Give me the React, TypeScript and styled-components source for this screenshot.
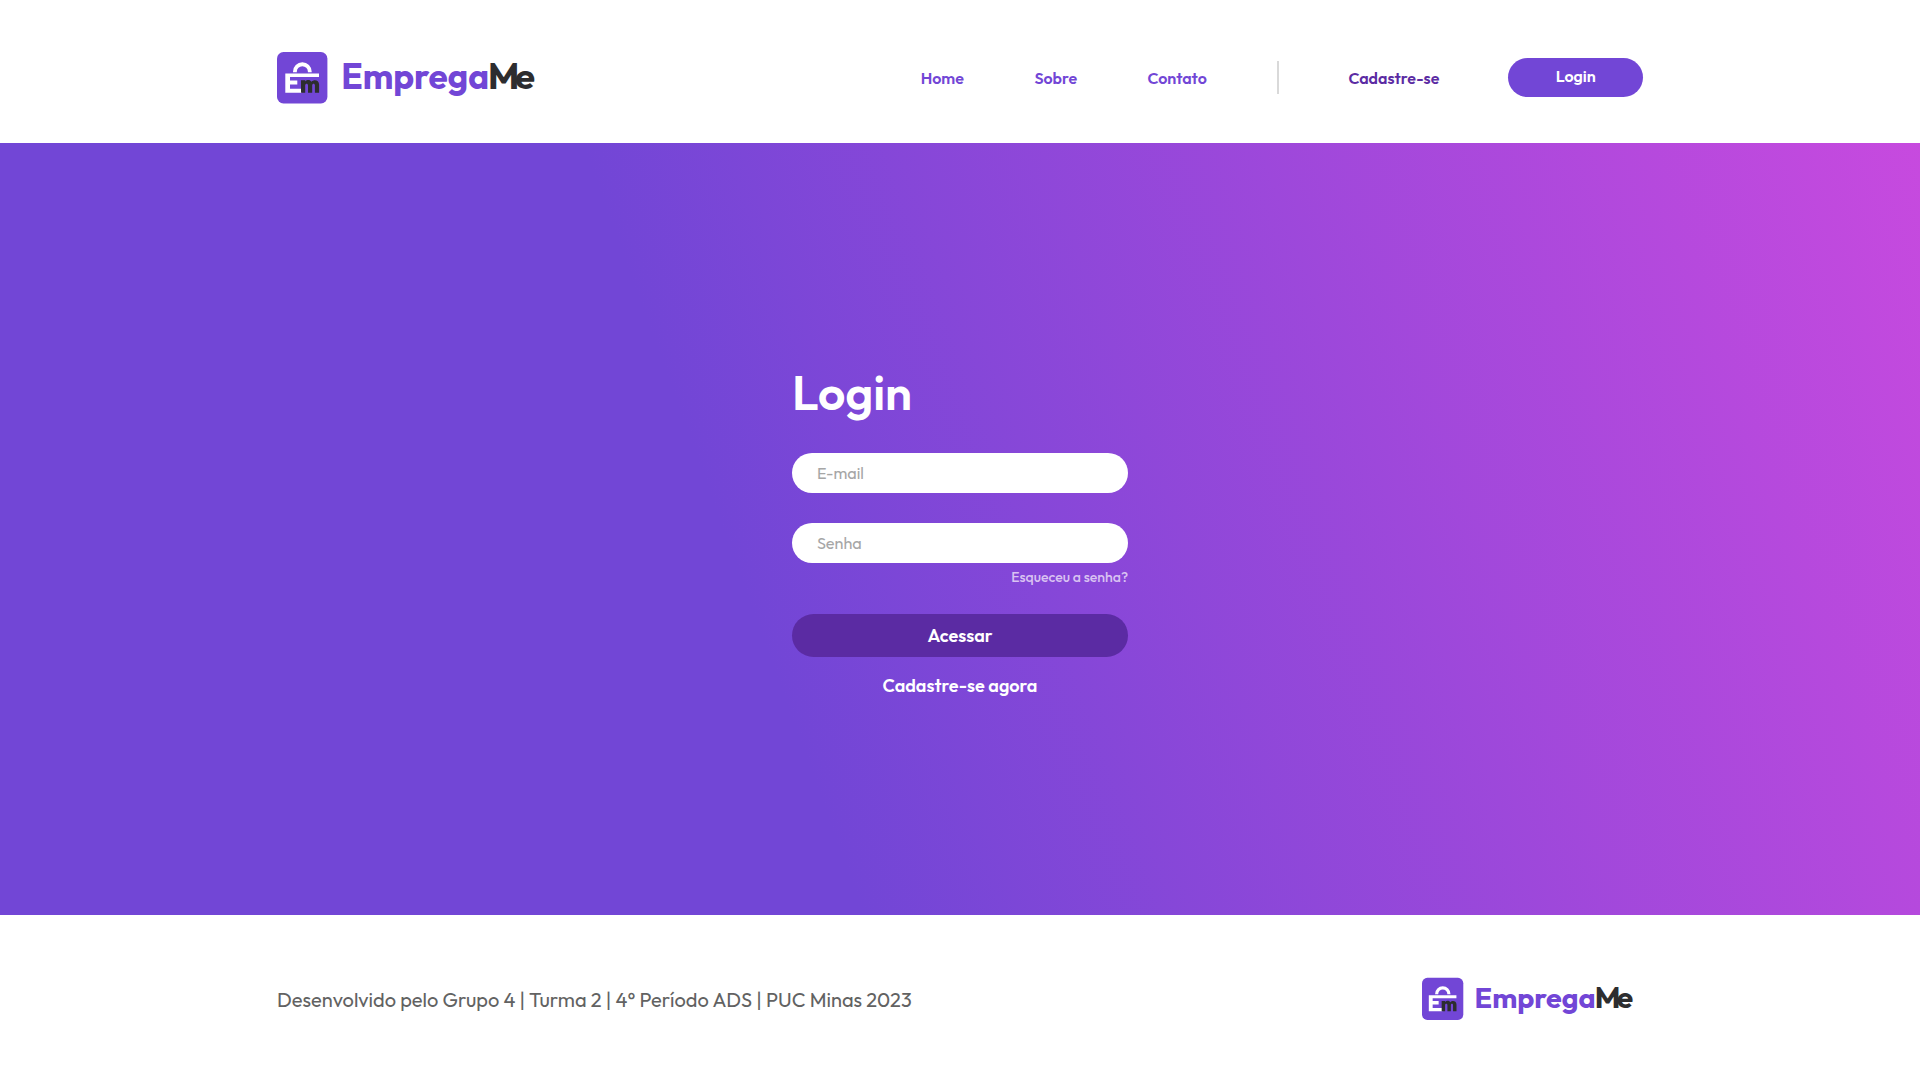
import React from "react";
import styled, { createGlobalStyle } from "styled-components";

const PURPLE = "#7246d6";
const DARK_PURPLE = "#5b2ba3";
const INK = "#2d2d2f";

const GlobalStyle = createGlobalStyle`
  * { box-sizing: border-box; }
  body {
    margin: 0;
    background: #fff;
    font-family: Outfit, Lato, sans-serif;
    overflow: hidden;
  }
`;

const Page = styled.div`
  display: flex;
  flex-direction: column;
  height: 1083px;
`;

const Container = styled.div`
  display: flex;
  align-items: center;
  justify-content: space-between;
  width: 1366px;
  margin: 0 auto;
`;

const Header = styled.header`
  height: 143px;
  flex: none;
  padding-top: 51px;
`;

const LogoLink = styled.a`
  display: flex;
  flex: none;
  text-decoration: none;
`;

const Nav = styled.nav`
  display: flex;
  align-items: center;
  height: 54px;
`;

const NavLink = styled.a<{ $width: number; $gap: number; $dark?: boolean }>`
  width: ${(p) => p.$width}px;
  margin-right: ${(p) => p.$gap}px;
  color: ${(p) => (p.$dark ? DARK_PURPLE : PURPLE)};
  font-size: 16px;
  font-weight: 600;
  line-height: 20px;
  text-decoration: none;
  white-space: nowrap;
`;

const Divider = styled.span`
  width: 2px;
  height: 33px;
  margin: 0 69px 2px 0;
  background: #d9d9d9;
`;

const LoginButton = styled.button`
  width: 134.6px;
  height: 39px;
  margin-bottom: 0.6px;
  padding: 0 0 3px;
  border: 0;
  border-radius: 20px;
  background: ${PURPLE};
  color: #fff;
  font: 600 16px/20px Outfit, Lato, sans-serif;
`;

const Hero = styled.main`
  display: flex;
  justify-content: center;
  height: 772px;
  flex: none;
  padding-top: 219px;
  background: linear-gradient(70deg, ${PURPLE} 39.2%, #c94adf 101.5%);
`;

const Form = styled.form`
  display: flex;
  flex-direction: column;
  width: 336px;
`;

const Title = styled.h1`
  margin: 0 0 30px;
  height: 61px;
  color: #fff;
  font-size: 48px;
  font-weight: 600;
  line-height: 61px;
`;

const Field = styled.input`
  width: 336px;
  height: 40px;
  margin: 0 0 30px;
  padding: 0 25px 1px;
  border: 0;
  border-radius: 20px;
  background: #fff;
  font: 400 16.2px/20px Outfit, Lato, sans-serif;
  &::placeholder { color: #a6a6a6; opacity: 1; }
  & + & { margin-bottom: 5px; }
`;

const Forgot = styled.a`
  align-self: flex-end;
  height: 18px;
  margin-bottom: 28px;
  color: #d9c2f2;
  font-size: 14.05px;
  font-weight: 500;
  line-height: 18px;
`;

const Submit = styled.button`
  height: 43px;
  padding: 0;
  border: 0;
  border-radius: 22px;
  background: ${DARK_PURPLE};
  color: #fff;
  font: 600 18px/22px Outfit, Lato, sans-serif;
`;

const SignUp = styled.a`
  align-self: center;
  margin-top: 18px;
  color: #fff;
  font-size: 18px;
  font-weight: 600;
  line-height: 22px;
`;

const Footer = styled.footer`
  flex: 1;
  padding-top: 62px;
`;

const Credits = styled.p`
  margin: 1px 0 0;
  color: #626262;
  font-size: 20px;
  line-height: 26px;
  white-space: nowrap;
`;

const FooterLogo = styled.div`
  display: flex;
  margin-right: 8px;
`;

function Logo({ width }: { width: number }) {
  return (
    <svg width={width} height={(width * 54) / 260} viewBox="0 0 260 54" aria-label="EmpregaMe">
      <rect x="0" y="1" width="50.4" height="51.4" rx="6.5" fill={PURPLE} />
      <path d="M17.9 21.2v-.5a7.45 7.45 0 0 1 14.9 0v.5" fill="none" stroke="#fff" strokeWidth="3.8" />
      <path d="M8.3 22.4H42v3.6H13v3.4h7.3v4.2H13v4.2h12v4H8.3z" fill="#fff" />
      <path
        d="M24 41.8V29.3h4.2v1.2c1.8-2 4.9-1.9 6.2.2 2.4-2.6 7.7-2 7.7 2.8v8.3h-4.2v-7.5c0-2.2-2.7-2.2-2.7 0v7.5h-4.2v-7.5c0-2.2-2.8-2.2-2.8 0v7.5z"
        fill={INK}
      />
      <text x="64.2" y="37.9" fontSize="35" fontWeight="700" fill={PURPLE} fontFamily="Outfit, Lato, sans-serif">
        Emprega
      </text>
      <text x="211" y="37.9" fontSize="36.5" fontWeight="700" fill={INK} letterSpacing="-4.4" fontFamily="Outfit, Lato, sans-serif">
        Me
      </text>
    </svg>
  );
}

export default function App() {
  return (
    <Page>
      <GlobalStyle />
      <Header>
        <Container>
          <LogoLink><Logo width={260} /></LogoLink>
          <Nav>
            <NavLink $width={43.4} $gap={70.4}>Home</NavLink>
            <NavLink $width={43} $gap={70}>Sobre</NavLink>
            <NavLink $width={60} $gap={70}>Contato</NavLink>
            <Divider />
            <NavLink $width={92} $gap={68} $dark>Cadastre-se</NavLink>
            <LoginButton>Login</LoginButton>
          </Nav>
        </Container>
      </Header>
      <Hero>
        <Form>
          <Title>Login</Title>
          <Field type="email" placeholder="E-mail" />
          <Field type="password" placeholder="Senha" />
          <Forgot>Esqueceu a senha?</Forgot>
          <Submit type="button">Acessar</Submit>
          <SignUp>Cadastre-se agora</SignUp>
        </Form>
      </Hero>
      <Footer>
        <Container>
          <Credits>Desenvolvido pelo Grupo 4 | Turma 2 | 4° Período ADS | PUC Minas 2023</Credits>
          <FooterLogo><Logo width={213} /></FooterLogo>
        </Container>
      </Footer>
    </Page>
  );
}
